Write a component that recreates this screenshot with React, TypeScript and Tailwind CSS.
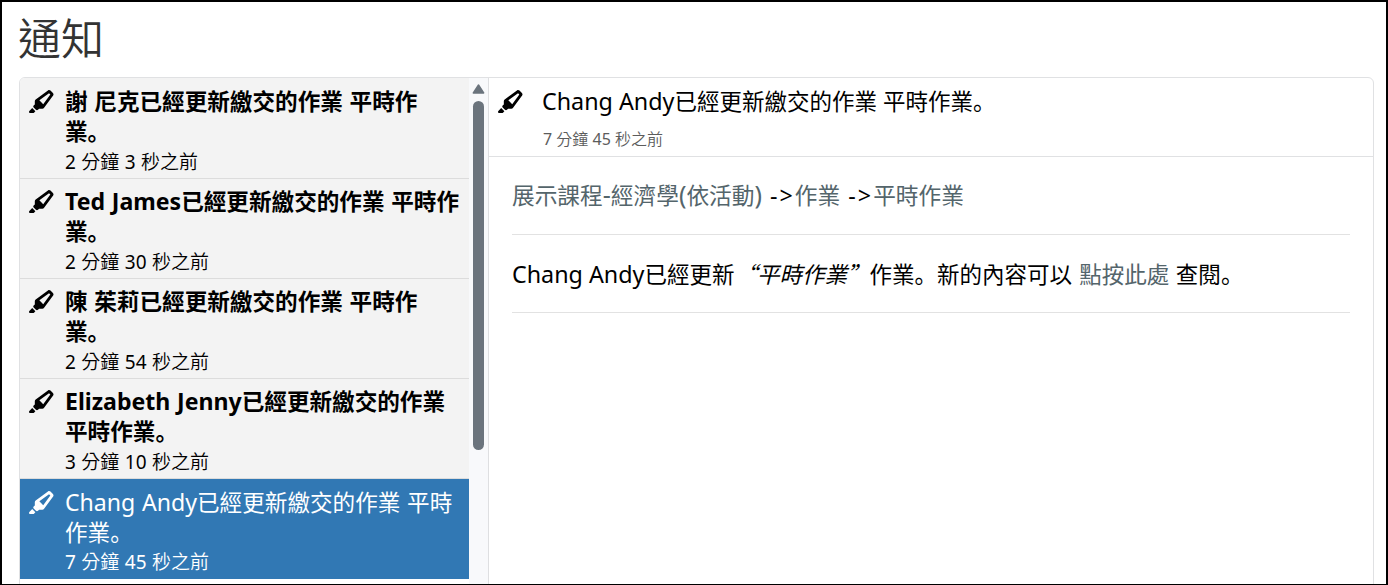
import { FaHighlighter } from "react-icons/fa6";
import clsx from "clsx";

// Latin runs are set slightly larger than the CJK glyphs around them,
// and the full stop sits at the lower left of its cell.
function Mixed({ text, latin = "" }: { text: string; latin?: string }) {
  const runs = text.match(/[\x20-\x7e]+|。|[^\x20-\x7e。]+/g) ?? [];
  return (
    <>
      {runs.map((run, i) =>
        /^[\x20-\x7e]/.test(run) ? (
          <span key={i} className={clsx("font-['Noto_Sans'] leading-none", latin)}>
            {run}
          </span>
        ) : run === "。" ? (
          <span key={i} lang="ja" className="font-['Noto_Sans_CJK_JP'] leading-none">
            {run}
          </span>
        ) : (
          <span key={i}>{run}</span>
        ),
      )}
    </>
  );
}

type Notice = { lines: string[]; time: string; tall?: boolean; active?: boolean };

const notices: Notice[] = [
  { lines: ["謝 尼克已經更新繳交的作業 平時作", "業。"], time: "2 分鐘 3 秒之前", tall: true },
  { lines: ["Ted James已經更新繳交的作業 平時作", "業。"], time: "2 分鐘 30 秒之前" },
  { lines: ["陳 茱莉已經更新繳交的作業 平時作", "業。"], time: "2 分鐘 54 秒之前" },
  { lines: ["Elizabeth Jenny已經更新繳交的作業", "平時作業。"], time: "3 分鐘 10 秒之前" },
  { lines: ["Chang Andy已經更新繳交的作業 平時", "作業。"], time: "7 分鐘 45 秒之前", active: true },
];

function NoticeRow({ lines, time, tall, active }: Notice) {
  return (
    <li
      className={clsx(
        "flex shrink-0 pl-[9px]",
        tall ? "h-[101px] pt-[10px]" : active ? "h-[100px] pt-[10px]" : "h-[100px] pt-[9px]",
        active ? "bg-[#3178b4] text-white" : "border-b border-[#dcdcdc] bg-[#f3f3f3] text-black",
      )}
    >
      <FaHighlighter className="mt-[2px] h-[23px] w-[26px] shrink-0" />
      <div className="-mt-[2px] ml-[10px] whitespace-nowrap">
        <div className={clsx("text-[22.6px] leading-[30px] [word-spacing:0.7px]", active ? "font-normal" : "font-bold")}>
          {lines.map((line) => (
            <div key={line} className="h-[30px]">
              <Mixed text={line} latin="text-[23.1px]" />
            </div>
          ))}
        </div>
        <div
          className={clsx(
            "text-[19px] leading-[28px] font-[350] [word-spacing:0.5px]",
            !active && "mt-px",
          )}
        >
          <Mixed text={time} latin="text-[19px] font-normal" />
        </div>
      </div>
    </li>
  );
}

export default function App() {
  return (
    <div className="h-[585px] w-[1388px] overflow-hidden border-2 border-b border-black bg-white pl-[16px] font-['Noto_Sans_CJK_TC',sans-serif] text-black">
      <h1 className="h-[75px] pt-[4px] text-[43px] leading-[60px] font-[350] text-[#333]">通知</h1>
      <div className="ml-px flex h-[620px] w-[1355px] overflow-hidden rounded-md border border-[#e0e1e3]">
        <ul className="flex w-[449px] shrink-0 flex-col">
          {notices.map((n) => (
            <NoticeRow key={n.time} {...n} />
          ))}
        </ul>
        <div className="flex w-[20px] shrink-0 flex-col items-center border-r border-[#dedfe1] bg-[#f8f9fb] pt-[6px]">
          <svg className="h-[10px] w-[13px]" viewBox="0 0 13 10">
            <path d="M6.5 1L11.7 9H1.3z" fill="#6b747d" stroke="#6b747d" strokeWidth="1.4" strokeLinejoin="round" />
          </svg>
          <div className="mt-[7px] h-[349px] w-[11px] rounded-full bg-[#6b747d]" />
        </div>
        <section className="flex-1">
          <header className="flex h-[79px] border-b border-[#e0e1e3] pt-[10px] pl-[9px]">
            <FaHighlighter className="mt-[2px] h-[23px] w-[26px] shrink-0" />
            <div className="-mt-[3px] ml-[18px] whitespace-nowrap">
              <div className="h-[30px] text-[22.5px] leading-[30px]">
                <Mixed text="Chang Andy已經更新繳交的作業 平時作業。" latin="text-[23.3px]" />
              </div>
              <div className="mt-[11px] ml-px text-[16px] leading-[24px] font-[350] text-[#5c5c5c]">
                <Mixed text="7 分鐘 45 秒之前" latin="text-[16px] font-normal" />
              </div>
            </div>
          </header>
          <div className="px-[23px] text-[22.5px] whitespace-nowrap">
            <div className="h-[78px] border-b border-[#e2e2e2] pt-[21px] text-[22.7px] leading-[34px]">
              <a className="text-[#54656b]">
                <Mixed text="展示課程-經濟學(依活動)" latin="text-[25px]" />
              </a>
              <Mixed text=" ->" latin="text-[23.3px] tracking-[2px]" />
              <a className="text-[#54656b]">作業</a>
              <Mixed text=" ->" latin="text-[23.3px] tracking-[2px]" />
              <a className="text-[#54656b]">平時作業</a>
            </div>
            <div className="h-[78px] border-b border-[#e2e2e2] pt-[21px] leading-[34px]">
              <Mixed text="Chang Andy已經更新" latin="text-[23.3px]" />
              <em>“平時作業”</em>
              <Mixed text="作業。新的內容可以 " latin="text-[28px]" />
              <a className="text-[#54656b]">點按此處</a>
              <Mixed text=" 查閱。" latin="text-[25px]" />
            </div>
          </div>
        </section>
      </div>
    </div>
  );
}
